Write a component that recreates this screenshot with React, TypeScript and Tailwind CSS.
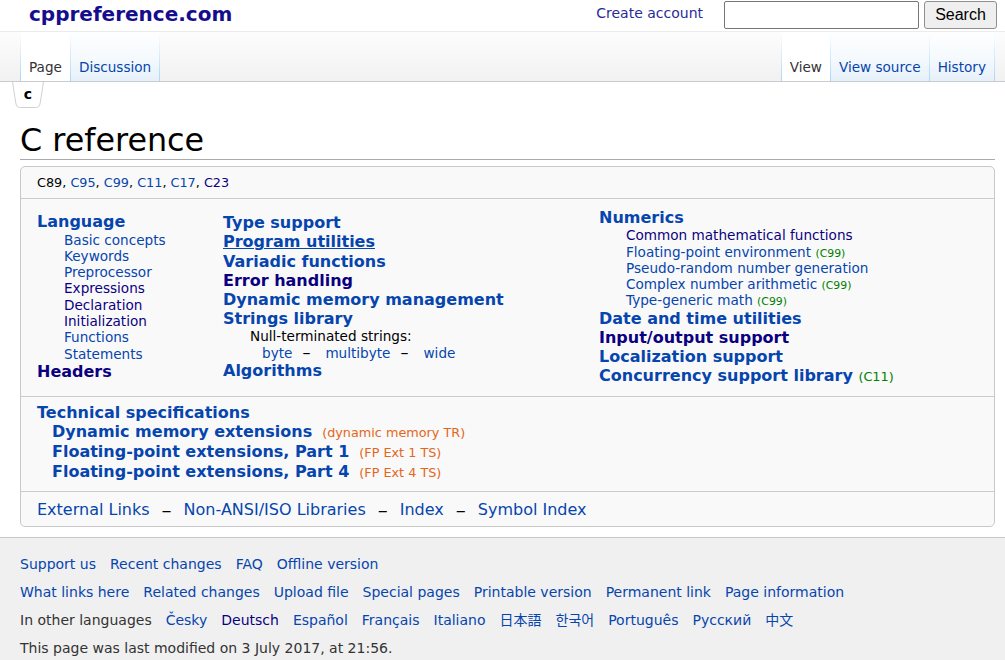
import React from "react";

const LINK = "text-[#0645ad]";
const VIS = "text-[#0b0080]";

function Sep() {
  return <div className="w-px self-stretch bg-linear-to-b from-[#ffffff] to-[#a7d7f9]" />;
}

function Tab({ children, selected }: { children: React.ReactNode; selected?: boolean }) {
  return (
    <div
      className={`flex items-end px-[8px] pb-[5px] text-[13.6px] leading-[17px] ${
        selected
          ? "bg-white text-[#333]"
          : "bg-linear-to-b from-[#fdfeff] via-[#f6fafd] to-[#e6f0fa] text-[#0645ad]"
      }`}
    >
      {children}
    </div>
  );
}

function H({ children, c = LINK, u = false }: { children: React.ReactNode; c?: string; u?: boolean }) {
  return (
    <div className={`text-[16px] font-bold leading-[19.2px] ${c} ${u ? "underline" : ""}`}>{children}</div>
  );
}

function S({ children, c = LINK }: { children: React.ReactNode; c?: string }) {
  return <div className={`pl-[27px] text-[13.6px] leading-[16.3px] ${c}`}>{children}</div>;
}

function Mark({ children }: { children: React.ReactNode }) {
  return (
    <>
      {" "}
      <span className="text-[10.88px] font-normal leading-none text-[#008000]">{children}</span>
    </>
  );
}

function Dash({ cls = "" }: { cls?: string }) {
  return <span className={`leading-none text-black ${cls}`}>–</span>;
}

export default function App() {
  return (
    <div className="w-[1005px] min-h-[660px] bg-white font-['DejaVu_Sans',sans-serif] text-black">
      {/* header */}
      <div className="flex h-[31px] items-start">
        <div className="pl-[29px] text-[20px] font-bold leading-[28px] text-[#150d8c]">cppreference.com</div>
        <div className="ml-auto flex items-start pr-[8px]">
          <div className="mt-[3px] text-[14px] leading-[20px] text-[#2a2a96]">Create account</div>
          <div className="ml-[21px] mt-[1px] h-[28px] w-[195px] rounded-[2px] border border-[#767676] bg-white" />
          <div className="ml-[5px] mt-[1px] flex h-[28px] w-[73px] items-center justify-center rounded-[3px] border border-[#8f8f8f] bg-[#efefef] font-['Liberation_Sans',sans-serif] text-[16px] text-black">
            Search
          </div>
        </div>
      </div>

      {/* tab bar */}
      <div className="flex h-[51px] border-t border-b border-t-[#ececec] border-b-[#c8ccd1] bg-linear-to-b from-[#fdfdfd] to-[#f1f1f1]">
        <div className="flex pl-[20px]">
          <Sep />
          <Tab selected>Page</Tab>
          <Sep />
          <Tab>Discussion</Tab>
          <Sep />
        </div>
        <div className="ml-auto flex pr-[10px]">
          <Sep />
          <Tab selected>View</Tab>
          <Sep />
          <Tab>View source</Tab>
          <Sep />
          <Tab>History</Tab>
          <Sep />
        </div>
      </div>

      {/* breadcrumb */}
      <div className="relative ml-[12px] h-[26px] w-[32px]">
        <svg className="absolute inset-0" width="32" height="26" viewBox="0 0 32 26">
          <path
            d="M0.5 0 L3.8 21 Q4.4 25.5 8.5 25.5 L23.5 25.5 Q27.6 25.5 28.2 21 L31.5 0"
            fill="#fff"
            stroke="#d0d0d0"
            strokeWidth="1"
          />
        </svg>
        <div className="relative flex h-[26px] items-center justify-center pb-[2px] text-[14px] font-bold leading-[16px]">
          c
        </div>
      </div>

      {/* title */}
      <div className="ml-[20px] mr-[10px] mt-[13px] border-b border-[#aaaaaa] text-[31.8px] leading-[38px]">
        C reference
      </div>

      {/* main box */}
      <div className="ml-[20px] mr-[10px] mt-[6px] rounded-[5px] border border-[#c8c8c8] bg-[#f9f9f9]">
        <div className="h-[32px] border-b border-[#cccccc] pl-[16px] text-[12.8px] leading-[31px]">
          <span>C89</span>, <span className={LINK}>C95</span>, <span className={LINK}>C99</span>,{" "}
          <span className={LINK}>C11</span>, <span className={LINK}>C17</span>, <span className={VIS}>C23</span>
        </div>

        <div className="grid grid-cols-[186px_376px_1fr] items-center border-b border-[#cccccc] pb-[10px] pl-[16px] pt-[9px]">
          <div>
            <H>Language</H>
            <S>Basic concepts</S>
            <S>Keywords</S>
            <S>Preprocessor</S>
            <S c={VIS}>Expressions</S>
            <S c={VIS}>Declaration</S>
            <S c={VIS}>Initialization</S>
            <S>Functions</S>
            <S>Statements</S>
            <H c={VIS}>Headers</H>
          </div>
          <div>
            <H>Type support</H>
            <H u>Program utilities</H>
            <H>Variadic functions</H>
            <H c={VIS}>Error handling</H>
            <H>Dynamic memory management</H>
            <H>Strings library</H>
            <div className="pl-[27px] text-[13.6px] leading-[16.3px]">Null-terminated strings:</div>
            <div className="flex h-[16.3px] items-center pl-[39px] text-[13.6px] leading-[16.3px]">
              <span className={LINK}>byte</span>
              <Dash cls="ml-[10px] mr-[15px] text-[16px]" />
              <span className={LINK}>multibyte</span>
              <Dash cls="ml-[10px] mr-[15px] text-[16px]" />
              <span className={LINK}>wide</span>
            </div>
            <H>Algorithms</H>
          </div>
          <div>
            <H>Numerics</H>
            <S c={VIS}>Common mathematical functions</S>
            <S>
              Floating-point environment<Mark>(C99)</Mark>
            </S>
            <S>Pseudo-random number generation</S>
            <S>
              Complex number arithmetic<Mark>(C99)</Mark>
            </S>
            <S>
              Type-generic math<Mark>(C99)</Mark>
            </S>
            <H>Date and time utilities</H>
            <H c={VIS}>Input/output support</H>
            <H>Localization support</H>
            <H>
              Concurrency support library{" "}
              <span className="text-[12.8px] font-normal leading-none text-[#008000]">(C11)</span>
            </H>
          </div>
        </div>

        <div className="border-b border-[#cccccc] pb-[9px] pl-[16px] pt-[6px]">
          <H>Technical specifications</H>
          <div className="pl-[15px] text-[16px] font-bold leading-[20px] text-[#0645ad]">
            <div className="h-[20px]">
              Dynamic memory extensions
              <span className="ml-[10px] text-[12.8px] font-normal leading-none text-[#e4661a]">(dynamic memory TR)</span>
            </div>
            <div className="h-[20px]">
              Floating-point extensions, Part 1
              <span className="ml-[10px] text-[12.8px] font-normal leading-none text-[#e4661a]">(FP Ext 1 TS)</span>
            </div>
            <div className="h-[20px]">
              Floating-point extensions, Part 4
              <span className="ml-[10px] text-[12.8px] font-normal leading-none text-[#e4661a]">(FP Ext 4 TS)</span>
            </div>
          </div>
        </div>

        <div className="flex h-[34px] items-center pl-[16px] pt-[2px] text-[16px] leading-[20px]">
          <span className={LINK}>External Links</span>
          <Dash cls="ml-[12px] mr-[12px] text-[20px]" />
          <span className={LINK}>Non-ANSI/ISO Libraries</span>
          <Dash cls="ml-[12px] mr-[12px] text-[20px]" />
          <span className={LINK}>Index</span>
          <Dash cls="ml-[12px] mr-[12px] text-[20px]" />
          <span className={LINK}>Symbol Index</span>
        </div>
      </div>

      {/* footer */}
      <div className="mt-[10px] border-t border-[#c8c8c8] bg-[#f0f0f0] pb-[10px] pl-[20px] pt-[12px] text-[14px] leading-[28px]">
        <div className={`flex gap-[14px] ${LINK}`}>
          <span>Support us</span>
          <span>Recent changes</span>
          <span>FAQ</span>
          <span>Offline version</span>
        </div>
        <div className={`flex gap-[14px] ${LINK}`}>
          <span>What links here</span>
          <span>Related changes</span>
          <span>Upload file</span>
          <span>Special pages</span>
          <span>Printable version</span>
          <span>Permanent link</span>
          <span>Page information</span>
        </div>
        <div className={`flex gap-[14px] ${LINK}`}>
          <span className="text-[#333]">In other languages</span>
          <span>Česky</span>
          <span className={VIS}>Deutsch</span>
          <span>Español</span>
          <span>Français</span>
          <span>Italiano</span>
          <span className="font-['DejaVu_Sans','Noto_Sans_CJK_JP',sans-serif]">日本語</span>
          <span className="font-['DejaVu_Sans','Noto_Sans_CJK_KR',sans-serif]">한국어</span>
          <span>Português</span>
          <span>Русский</span>
          <span className="font-['DejaVu_Sans','Noto_Sans_CJK_SC',sans-serif]">中文</span>
        </div>
        <div className="text-[#333]">This page was last modified on 3 July 2017, at 21:56.</div>
      </div>
    </div>
  );
}
